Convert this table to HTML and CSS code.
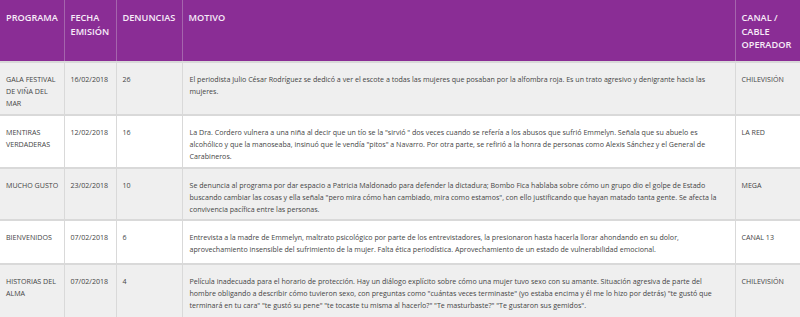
FILE: index.html
```html
<!DOCTYPE html>
<html lang="es">
<head>
<meta charset="utf-8">
<title>Denuncias</title>
<link rel="stylesheet" href="styles.css">
</head>
<body>
<table class="tabla">
  <colgroup>
    <col class="c-prog">
    <col class="c-fecha">
    <col class="c-den">
    <col class="c-motivo">
    <col class="c-canal">
  </colgroup>
  <thead>
    <tr class="head">
      <th>PROGRAMA</th>
      <th>FECHA EMISIÓN</th>
      <th>DENUNCIAS</th>
      <th>MOTIVO</th>
      <th>CANAL / CABLE OPERADOR</th>
    </tr>
  </thead>
  <tbody>
    <tr class="row gray h53">
      <td>GALA FESTIVAL DE VIÑA DEL MAR</td>
      <td>16/02/2018</td>
      <td>26</td>
      <td class="motivo">El periodista Julio César Rodríguez se dedicó a ver el escote a todas las mujeres que posaban por la alfombra roja. Es un trato agresivo y denigrante hacia las mujeres.</td>
      <td>CHILEVISIÓN</td>
    </tr>
    <tr class="row white h53">
      <td>MENTIRAS VERDADERAS</td>
      <td>12/02/2018</td>
      <td>16</td>
      <td class="motivo">La Dra. Cordero vulnera a una niña al decir que un tío se la "sirvió " dos veces cuando se refería a los abusos que sufrió Emmelyn. Señala que su abuelo es alcohólico y que la manoseaba, insinuó que le vendía "pitos" a Navarro. Por otra parte, se refirió a la honra de personas como Alexis Sánchez y el General de Carabineros.</td>
      <td>LA RED</td>
    </tr>
    <tr class="row gray h52">
      <td>MUCHO GUSTO</td>
      <td>23/02/2018</td>
      <td>10</td>
      <td class="motivo">Se denuncia al programa por dar espacio a Patricia Maldonado para defender la dictadura; Bombo Fica hablaba sobre cómo un grupo dio el golpe de Estado buscando cambiar las cosas y ella señala "pero mira cómo han cambiado, mira como estamos", con ello justificando que hayan matado tanta gente. Se afecta la convivencia pacífica entre las personas.</td>
      <td>MEGA</td>
    </tr>
    <tr class="row white h44">
      <td>BIENVENIDOS</td>
      <td>07/02/2018</td>
      <td>6</td>
      <td class="motivo">Entrevista a la madre de Emmelyn, maltrato psicológico por parte de los entrevistadores, la presionaron hasta hacerla llorar ahondando en su dolor, aprovechamiento insensible del sufrimiento de la mujer. Falta ética periodística. Aprovechamiento de un estado de vulnerabilidad emocional.</td>
      <td>CANAL 13</td>
    </tr>
    <tr class="row gray h53">
      <td>HISTORIAS DEL ALMA</td>
      <td>07/02/2018</td>
      <td>4</td>
      <td class="motivo">Película inadecuada para el horario de protección. Hay un diálogo explícito sobre cómo una mujer tuvo sexo con su amante. Situación agresiva de parte del hombre obligando a describir cómo tuvieron sexo, con preguntas como "cuántas veces terminaste" (yo estaba encima y él me lo hizo por detrás) "te gustó que terminará en tu cara" "te gustó su pene" "te tocaste tu misma al hacerlo?" "Te masturbaste?" "Te gustaron sus gemidos".</td>
      <td>CHILEVISIÓN</td>
    </tr>
  </tbody>
</table>
</body>
</html>
```

FILE: styles.css
```css
html, body {
  margin: 0;
  padding: 0;
  background: #ffffff;
}

body {
  font-family: "Open Sans", "DejaVu Sans", sans-serif;
}

.tabla {
  border-collapse: collapse;
  table-layout: fixed;
  width: 800px;
}

.c-prog { width: 64px; }
.c-fecha { width: 52px; }
.c-den { width: 66px; }
.c-motivo { width: 553px; }
.c-canal { width: 65px; }

.head th {
  height: 62px;
  box-sizing: border-box;
  background: #8a2d95;
  color: #f7ecf8;
  font-size: 9.2px;
  font-weight: 600;
  line-height: 13.5px;
  text-align: left;
  vertical-align: top;
  padding: 11px 4px 0 6px;
  border-left: 1px solid #a565ad;
  border-right: 1px solid #a565ad;
}

.head th:first-child { border-left: none; }

.row td {
  box-sizing: border-box;
  font-size: 7.1px;
  line-height: 12px;
  color: #454545;
  vertical-align: top;
  padding: 10px 2px 0 6px;
  border: 1px solid #d9d9d9;
  border-top-width: 2px;
}

.row td.motivo {
  padding-left: 7px;
  padding-right: 14px;
}

.row td:first-child { border-left: none; }

.gray td { background: #efefef; }
.white td { background: #ffffff; }

.h53 { height: 53px; }
.h52 { height: 52px; }
.h44 { height: 44px; }
```
